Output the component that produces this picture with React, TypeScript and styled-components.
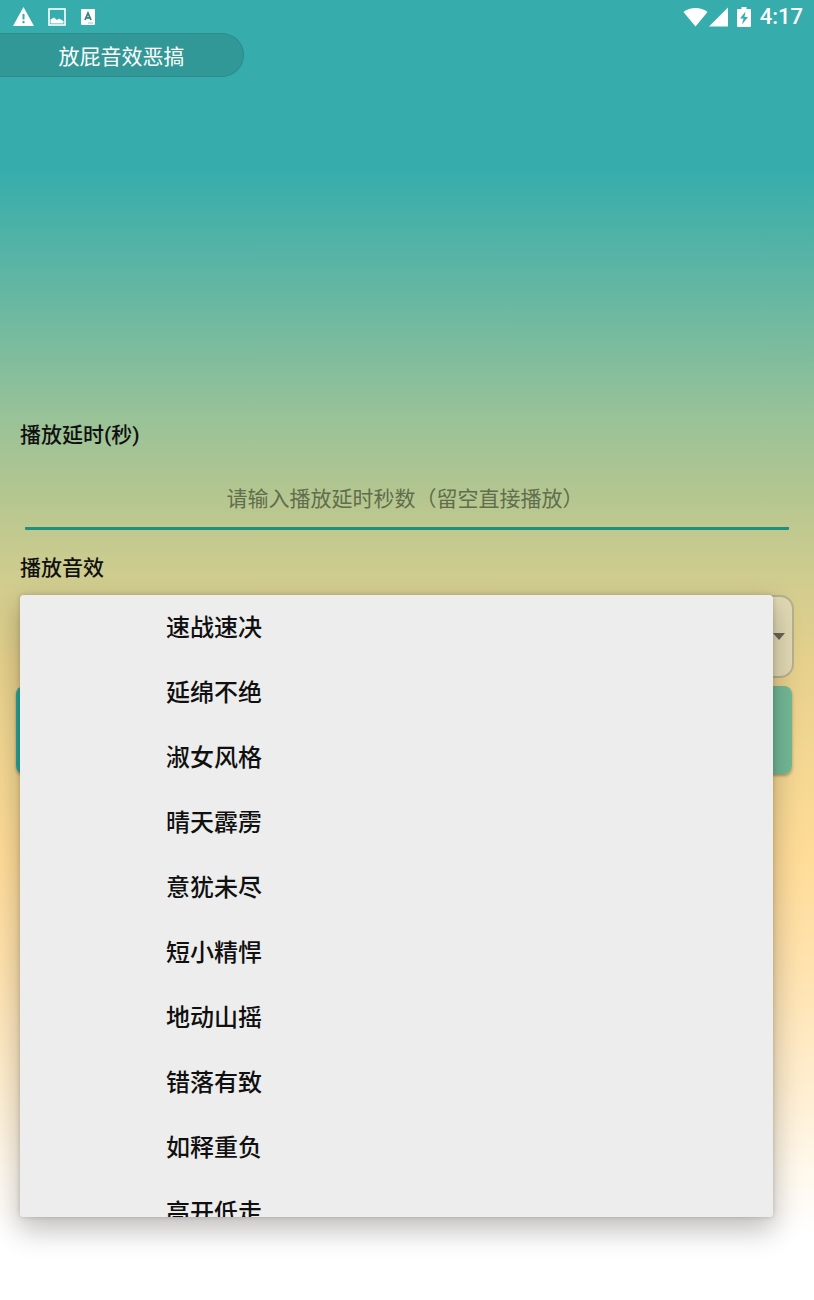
import React from "react";
import styled, { createGlobalStyle } from "styled-components";

const GlobalStyle = createGlobalStyle`
  *, *::before, *::after { box-sizing: border-box; }
  body {
    margin: 0;
    font-family: Roboto, "Noto Sans CJK SC", sans-serif;
    color: #101010;
  }
`;

const Screen = styled.div`
  min-height: 100vh;
  display: flex;
  flex-direction: column;
  background: linear-gradient(
    #36adac 0%,
    #36adac 13%,
    #62b6a3 22%,
    #98c298 32%,
    #b4c690 38%,
    #cecc8f 44%,
    #e6d08c 51%,
    #f6d893 60%,
    #ffdc98 66%,
    #ffe2ad 74%,
    #ffedcd 83%,
    #fff8ec 90%,
    #ffffff 95%
  );
`;

const StatusBar = styled.header`
  height: 33px;
  display: flex;
  align-items: center;
  justify-content: space-between;
  padding: 0 11px 0 13px;
  color: #fff;
`;

const IconGroup = styled.div<{ $gap: number }>`
  display: flex;
  align-items: center;
  gap: ${(p) => p.$gap}px;

  svg { display: block; }
`;

const Clock = styled.time`
  font-size: 22px;
  line-height: 24px;
  font-weight: 500;
`;

const Title = styled.h1`
  width: 30%;
  height: 44px;
  margin: 0;
  display: flex;
  align-items: center;
  justify-content: center;
  border: 1px solid #2b8c8b;
  border-left: 0;
  border-radius: 0 22px 22px 0;
  background: #319897;
  color: #fff;
  font-size: 21px;
  font-weight: 400;
`;

const Form = styled.form`
  display: flex;
  flex-direction: column;
  margin-top: 344px;
  padding: 0 20px 32px;
`;

const Label = styled.label`
  font-size: 21px;
  line-height: 28px;
  font-weight: 500;
`;

const DelayInput = styled.input`
  height: 60px;
  margin: 21px 5px 24px;
  padding: 0 4px 0 0;
  border: 0;
  border-bottom: 3px solid #1d9080;
  border-radius: 1px;
  background: transparent;
  color: #101010;
  font: inherit;
  font-size: 21px;
  text-align: center;
  outline: none;

  &::placeholder { color: #5f6e4c; opacity: 1; }
`;

const Picker = styled.div`
  position: relative;
  margin-top: 13px;
`;

const SelectBox = styled.div`
  display: flex;
  align-items: center;
  height: 83px;
  padding-right: 7px;
  border: 2px solid #b9b08f;
  border-radius: 14px;
  background: #e2d9b4;
`;

const Select = styled.select`
  flex: 1;
  height: 100%;
  padding: 0 144px;
  border: 0;
  background: transparent;
  appearance: none;
  font: inherit;
  font-size: 24px;
`;

const Popup = styled.ul`
  position: absolute;
  top: 0;
  left: 0;
  right: 21px;
  z-index: 1;
  max-height: 622px;
  margin: 0;
  padding: 1px 0 0;
  overflow-y: auto;
  scrollbar-width: none;
  list-style: none;
  border-radius: 4px;
  background: #ededed;
  box-shadow: 0 12px 28px 2px rgba(0, 0, 0, 0.24), 0 0 5px rgba(0, 0, 0, 0.18);
`;

const Option = styled.li`
  height: 65px;
  padding-left: 146px;
  font-size: 24px;
  line-height: 65px;
  font-weight: 500;
`;

const PlayButton = styled.button`
  height: 88px;
  margin: 8px 2px 0 -4px;
  border: 0;
  border-radius: 8px;
  background: linear-gradient(90deg, #2fa79d, #74b996);
  box-shadow: 0 2px 3px rgba(0, 0, 0, 0.3);
`;

const SOUNDS = [
  "速战速决",
  "延绵不绝",
  "淑女风格",
  "晴天霹雳",
  "意犹未尽",
  "短小精悍",
  "地动山摇",
  "错落有致",
  "如释重负",
  "高开低走",
];

const WarningIcon = () => (
  <svg width="21" height="20" viewBox="0 0 21 20" fill="currentColor" aria-hidden="true">
    <path fillRule="evenodd" d="M10.500 0 21 19H0ZM9.500 7v5.500h2V7ZM9.500 14v2.200h2V14Z" />
  </svg>
);

const PictureIcon = () => (
  <svg width="18" height="18" viewBox="0 0 18 18" aria-hidden="true">
    <rect x="1" y="1" width="16" height="16" fill="none" stroke="currentColor" strokeWidth="1.600" />
    <path fill="currentColor" d="M2.500 15.500v-4l3.500-2 3 2.500 2-1.500 4.500 2.500v2.500Z" />
  </svg>
);

const LetterIcon = () => (
  <svg width="16" height="18" viewBox="0 0 16 18" aria-hidden="true">
    <rect x="1" y="1" width="14" height="16" rx="1" fill="currentColor" />
    <path d="M5 12 8 5l3 7M6 9.800h4" fill="none" stroke="#36817f" strokeWidth="1.800" />
    <path d="M8 15h5" stroke="#8ccfcd" strokeWidth="1" />
  </svg>
);

const WifiIcon = () => (
  <svg width="25" height="20" viewBox="0 0 25 20" fill="currentColor" aria-hidden="true">
    <path d="M.5 5C7-.3 18-.3 24.500 5L12.500 19.500Z" />
  </svg>
);

const SignalIcon = () => (
  <svg width="19" height="20" viewBox="0 0 19 20" fill="currentColor" aria-hidden="true">
    <path d="M19 .5v19H0Z" />
  </svg>
);

const BatteryIcon = () => (
  <svg width="14" height="20" viewBox="0 0 14 20" fill="currentColor" aria-hidden="true">
    <path fillRule="evenodd" d="M4.500 0h5v2H13q1 0 1 1v16q0 1-1 1H1q-1 0-1-1V3q0-1 1-1h3.500ZM8.500 4.500 3 11.500h3.500L5 17.500l6-7.500H7.500Z" />
  </svg>
);

const Arrow = () => (
  <svg width="12" height="7" viewBox="0 0 12 7" aria-hidden="true">
    <path d="M0 0h12L6 7Z" fill="#6a6555" />
  </svg>
);

export default function App() {
  return (
    <Screen>
      <GlobalStyle />
      <StatusBar>
        <IconGroup $gap={14}>
          <WarningIcon />
          <PictureIcon />
          <LetterIcon />
        </IconGroup>
        <IconGroup $gap={9}>
          <IconGroup $gap={1}>
            <WifiIcon />
            <SignalIcon />
          </IconGroup>
          <BatteryIcon />
          <Clock>4:17</Clock>
        </IconGroup>
      </StatusBar>
      <Title>放屁音效恶搞</Title>
      <Form onSubmit={(e) => e.preventDefault()}>
        <Label htmlFor="delay">播放延时(秒)</Label>
        <DelayInput id="delay" inputMode="numeric" placeholder="请输入播放延时秒数（留空直接播放）" />
        <Label htmlFor="sound">播放音效</Label>
        <Picker>
          <SelectBox>
            <Select id="sound">
              {SOUNDS.map((name) => (
                <option key={name}>{name}</option>
              ))}
            </Select>
            <Arrow />
          </SelectBox>
          <Popup role="listbox" aria-label="播放音效">
            {SOUNDS.map((name, i) => (
              <Option key={name} role="option" aria-selected={i === 0}>
                {name}
              </Option>
            ))}
          </Popup>
        </Picker>
        <PlayButton type="submit" aria-label="播放" />
      </Form>
    </Screen>
  );
}
